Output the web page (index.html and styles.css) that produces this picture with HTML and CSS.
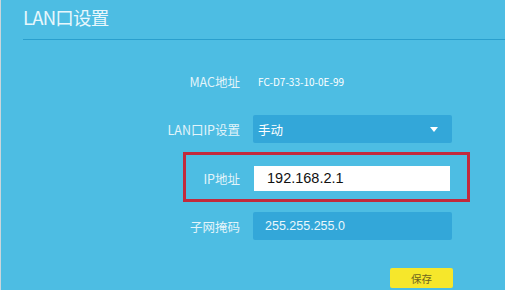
FILE: index.html
```html
<!DOCTYPE html>
<html lang="zh-CN">
<head>
  <meta charset="UTF-8">
  <title>LAN口设置</title>
  <link rel="stylesheet" href="styles.css">
</head>
<body>

<div class="page">
  <!-- 标题 -->
  <div class="header">
    <h1 class="title">LAN口设置</h1>
  </div>

  <div class="form">
    <div class="row row-mac">
      <div class="label">MAC地址</div>
      <div class="field mac">FC-D7-33-10-0E-99</div>
    </div>

    <div class="row row-mode">
      <div class="label">LAN口IP设置</div>
      <div class="field select">
        <span>手动</span>
        <span class="arrow"></span>
      </div>
    </div>

    <div class="row row-ip">
      <div class="label">IP地址</div>
      <div class="field input-white">192.168.2.1</div>
    </div>

    <div class="row row-mask">
      <div class="label">子网掩码</div>
      <div class="field input-blue">255.255.255.0</div>
    </div>

    <div class="row row-save">
      <div class="label"></div>
      <div class="field actions">
        <button class="save">保存</button>
      </div>
    </div>
  </div>
</div>

</body>
</html>
```

FILE: styles.css
```css
* {
  box-sizing: border-box;
}
body {
  margin: 0;
  background-color: #4dbde3;
  font-family: "Noto Sans CJK SC", "Noto Sans", sans-serif;
}
.page {
  height: 290px;
  border-left: 1px solid #c9d6dc;
  overflow: hidden;
}
.header {
  margin-left: 22px;
  height: 40px;
  border-bottom: 1px solid #2a9fcd;
}
.title {
  margin: 0;
  padding-top: 4px;
  font-size: 18.5px;
  font-weight: normal;
  line-height: 27px;
  letter-spacing: -0.8px;
  color: #e8f7fc;
}
.form {
  display: flex;
  flex-direction: column;
}
.row {
  display: flex;
  align-items: center;
  margin-left: 145px;
}
.label {
  width: 94px;
  text-align: right;
  font-size: 12.5px;
  color: #e3f4fa;
  white-space: nowrap;
}
.field {
  margin-left: 13px;
  width: 199px;
  color: #fff;
}
.row-mac {
  margin-top: 31px;
  height: 20px;
}
.mac {
  font-size: 10px;
  padding-left: 5px;
}
.row-mode {
  margin-top: 24px;
  height: 28px;
}
.select {
  height: 28px;
  background-color: #33a7d9;
  border-radius: 2px;
  display: flex;
  align-items: center;
  justify-content: space-between;
  padding: 0 14px 0 5px;
  font-size: 12.5px;
}
.arrow {
  width: 0;
  height: 0;
  border-left: 4px solid transparent;
  border-right: 4px solid transparent;
  border-top: 5px solid #fff;
}
.row-ip {
  margin-top: 9px;
  margin-left: 182px;
  width: 287px;
  height: 50px;
  border: 3px solid #c22a3d;
  padding-top: 2px;
}
.row-ip .label {
  width: 54px;
}
.input-white {
  margin-left: 14px;
  width: 196px;
  height: 25px;
  background-color: #fff;
  color: #111;
  font-family: "Liberation Sans", sans-serif;
  font-size: 14.5px;
  line-height: 25px;
  padding-left: 13px;
}
.row-mask {
  margin-top: 10px;
  height: 28px;
}
.input-blue {
  height: 28px;
  background-color: #33a7d9;
  border-radius: 2px;
  font-family: "Liberation Sans", sans-serif;
  font-size: 12.5px;
  line-height: 28px;
  padding-left: 12px;
  color: #e9f7fc;
}
.row-save {
  margin-top: 28px;
}
.actions {
  display: flex;
  justify-content: flex-end;
}
.save {
  width: 63px;
  height: 20px;
  margin-right: -1px;
  border: none;
  border-radius: 2px;
  background-color: #f6e72b;
  color: #6d6420;
  font-family: "Noto Sans CJK SC", sans-serif;
  font-size: 10.5px;
  padding: 0;
}
```
